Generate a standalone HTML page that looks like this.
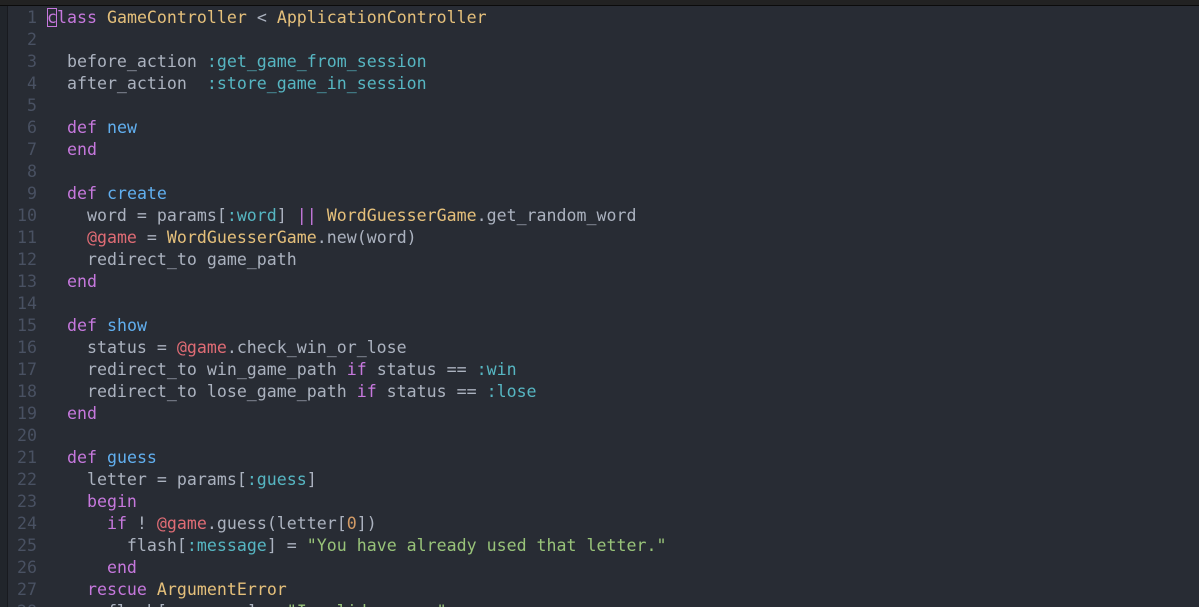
<!DOCTYPE html>
<html style="overflow:hidden;height:607px"><head><style>
html,body{margin:0;width:1199px;height:607px;overflow:hidden;background:#282c34}
body{position:relative}
#top{position:absolute;left:0;top:0;width:1199px;height:5px;background:#222;border-bottom:1px solid #0b0b0b}
#side{position:absolute;left:0;top:6px;width:7px;height:601px;background:#21252b;border-right:1px solid #181a1f}
#code{position:absolute;left:8px;top:7px;height:600px;overflow:hidden;font-family:"DejaVu Sans Mono","Liberation Mono",monospace;font-size:16.6px;line-height:22px;color:#abb2bf;white-space:pre}
.l{display:block;height:22px}
.n{display:inline-block;width:29px;text-align:right;color:#495162;margin-right:10px}
.k{color:#c678dd}.f{color:#61afef}.c{color:#e5c07b}.s{color:#56b6c2}.i{color:#e06c75}.g{color:#98c379}.d{color:#d19a66}
.cur{outline:1px solid #c678dd;outline-offset:-1px}
</style></head><body>
<div id="top"></div><div id="side"></div>
<div id="code"><span class="l"><span class="n">1</span><span class="k"><span class="cur">c</span>lass</span> <span class="c">GameController</span> &lt; <span class="c">ApplicationController</span></span><span class="l"><span class="n">2</span></span><span class="l"><span class="n">3</span>  before_action <span class="s">:get_game_from_session</span></span><span class="l"><span class="n">4</span>  after_action  <span class="s">:store_game_in_session</span></span><span class="l"><span class="n">5</span></span><span class="l"><span class="n">6</span>  <span class="k">def</span> <span class="f">new</span></span><span class="l"><span class="n">7</span>  <span class="k">end</span></span><span class="l"><span class="n">8</span></span><span class="l"><span class="n">9</span>  <span class="k">def</span> <span class="f">create</span></span><span class="l"><span class="n">10</span>    word = params[<span class="s">:word</span>] <span class="k">||</span> <span class="c">WordGuesserGame</span>.get_random_word</span><span class="l"><span class="n">11</span>    <span class="i">@game</span> = <span class="c">WordGuesserGame</span>.new(word)</span><span class="l"><span class="n">12</span>    redirect_to game_path</span><span class="l"><span class="n">13</span>  <span class="k">end</span></span><span class="l"><span class="n">14</span></span><span class="l"><span class="n">15</span>  <span class="k">def</span> <span class="f">show</span></span><span class="l"><span class="n">16</span>    status = <span class="i">@game</span>.check_win_or_lose</span><span class="l"><span class="n">17</span>    redirect_to win_game_path <span class="k">if</span> status == <span class="s">:win</span></span><span class="l"><span class="n">18</span>    redirect_to lose_game_path <span class="k">if</span> status == <span class="s">:lose</span></span><span class="l"><span class="n">19</span>  <span class="k">end</span></span><span class="l"><span class="n">20</span></span><span class="l"><span class="n">21</span>  <span class="k">def</span> <span class="f">guess</span></span><span class="l"><span class="n">22</span>    letter = params[<span class="s">:guess</span>]</span><span class="l"><span class="n">23</span>    <span class="k">begin</span></span><span class="l"><span class="n">24</span>      <span class="k">if</span> ! <span class="i">@game</span>.guess(letter[<span class="d">0</span>])</span><span class="l"><span class="n">25</span>        flash[<span class="s">:message</span>] = <span class="g">"You have already used that letter."</span></span><span class="l"><span class="n">26</span>      <span class="k">end</span></span><span class="l"><span class="n">27</span>    <span class="k">rescue</span> <span class="c">ArgumentError</span></span><span class="l"><span class="n">28</span>      flash[<span class="s">:message</span>] = <span class="g">"Invalid guess."</span></span></div>
</body></html>
